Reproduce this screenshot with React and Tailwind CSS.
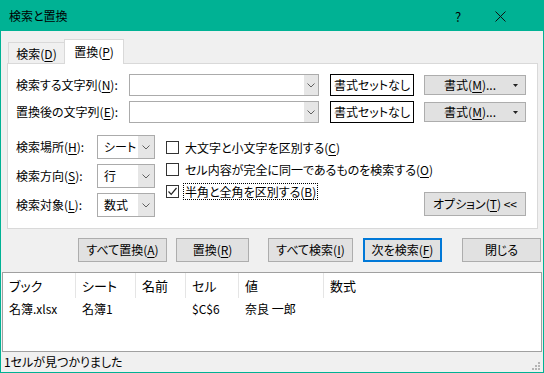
import React from 'react'

const U = ({ children }) => (
  <span className="underline underline-offset-[2px] decoration-[1px]">{children}</span>
)

const Chevron = () => (
  <svg width="8" height="5" viewBox="0 0 8 5">
    <path d="M0.5 0.5 L4 4 L7.5 0.5" stroke="#606060" strokeWidth="1" fill="none" />
  </svg>
)

const Combo = ({ className, value, arrowW }) => (
  <div className={`flex bg-white border border-[#ababab] ${className}`}>
    <div className="flex-1 flex items-center pl-[6px]">{value}</div>
    <div className={`flex items-center justify-center bg-[#e6e6e6] ${arrowW}`}>
      <Chevron />
    </div>
  </div>
)

const Check = ({ checked, label, focus }) => (
  <div className="flex items-center h-[22px] whitespace-nowrap">
    <div className="w-[13px] h-[13px] shrink-0 border border-[#333] bg-white flex items-center justify-center">
      {checked && (
        <svg width="11" height="11" viewBox="0 0 11 11">
          <path d="M1.5 5.5 L4.2 8.3 L9.5 2" stroke="#222" strokeWidth="1.2" fill="none" />
        </svg>
      )}
    </div>
    <div className={`ml-[4px] px-[1px] leading-[15px] ${focus ? 'border border-dotted border-black' : 'border border-transparent'}`}>
      {label}
    </div>
  </div>
)

const Btn = ({ className, children, primary }) => (
  <div
    className={`flex items-center justify-center whitespace-nowrap bg-[#e1e1e1] ${
      primary ? 'border-2 border-[#0078d7]' : 'border border-[#adadad]'
    } ${className}`}
  >
    {children}
  </div>
)

const columns = [
  { name: 'ブック', w: 'w-[73px]' },
  { name: 'シート', w: 'w-[60px]' },
  { name: '名前', w: 'w-[50px]' },
  { name: 'セル', w: 'w-[53px]' },
  { name: '値', w: 'w-[85px]' },
  { name: '数式', w: 'flex-1' },
]

const row = ['名簿.xlsx', '名簿1', '', '$C$6', '奈良 一郎', '']

export default function App() {
  return (
    <div className="w-[544px] h-[373px] border border-[#00b294] bg-[#f0f0f0] flex flex-col text-[12px] text-black font-['Noto_Sans_CJK_JP',sans-serif] [font-feature-settings:'palt'] leading-none overflow-hidden">
      {/* title bar */}
      <div className="h-[30px] bg-[#00b294] flex items-center pl-[8px]">
        <span className="flex-1">検索と置換</span>
        <span className="w-[46px] text-center text-[13px]">?</span>
        <span className="w-[38px] flex justify-center">
          <svg width="11" height="11" viewBox="0 0 11 11">
            <path d="M0.5 0.5 L10.5 10.5 M10.5 0.5 L0.5 10.5" stroke="#111" strokeWidth="1" />
          </svg>
        </span>
        <span className="w-[24px]" />
      </div>

      {/* tabs */}
      <div className="flex items-end h-[25px] mt-[8px] ml-[6px]">
        <div className="w-[56px] h-[22px] ml-px border border-b-0 border-r-0 border-[#d9d9d9] flex items-center justify-center">
          検索(<U>D</U>)
        </div>
        <div className="w-[60px] h-[25px] bg-white border border-b-0 border-[#d9d9d9] flex items-center justify-center relative z-10">
          置換(<U>P</U>)
        </div>
      </div>

      {/* panel */}
      <div className="ml-[6px] -mt-px w-[531px] h-[166px] bg-white border border-[#d9d9d9] pt-[10px] pl-[8px]">
        {[
          ['検索する文字列(', 'N', '):'],
          ['置換後の文字列(', 'E', '):'],
        ].map(([a, k, b], i) => (
          <div key={k} className={`flex items-center h-[22px] ${i ? 'mt-[5px]' : ''}`}>
            <div className="w-[113px]">
              {a}
              <U>{k}</U>
              {b}
            </div>
            <Combo className="w-[190px] h-[22px]" value="" arrowW="w-[14px]" />
            <div className="ml-[11px] w-[84px] h-[22px] border border-black flex items-center justify-center">
              書式セットなし
            </div>
            <Btn className="ml-[10px] w-[102px] h-[20px] !justify-end pr-[7px]">
              書式(<U>M</U>)...
              <svg className="ml-[17px]" width="5" height="3" viewBox="0 0 5 3">
                <path d="M0 0 L5 0 L2.5 3 Z" fill="#222" />
              </svg>
            </Btn>
          </div>
        ))}

        <div className="flex mt-[12px]">
          <div className="flex flex-col gap-[5px]">
            {[
              ['検索場所(', 'H', '):', 'シート'],
              ['検索方向(', 'S', '):', '行'],
              ['検索対象(', 'L', '):', '数式'],
            ].map(([a, k, b, v]) => (
              <div key={k} className="flex items-center h-[24px]">
                <div className="w-[81px]">
                  {a}
                  <U>{k}</U>
                  {b}
                </div>
                <Combo className="w-[58px] h-[24px]" value={v} arrowW="w-[16px]" />
              </div>
            ))}
          </div>
          <div className="ml-[11px] mt-[1px] flex flex-col flex-1 min-w-0">
            <Check label={<>大文字と小文字を区別する(<U>C</U>)</>} />
            <Check label={<>セル内容が完全に同一であるものを検索する(<U>O</U>)</>} />
            <Check checked focus label={<>半角と全角を区別する(<U>B</U>)</>} />
          </div>
          <div className="flex flex-col justify-end pb-[1px] pr-[11px]">
            <Btn className="w-[102px] h-[24px]">
              オプション(<U>T</U>) &lt;&lt;
            </Btn>
          </div>
        </div>
      </div>

      {/* action buttons */}
      <div className="flex mt-[9px] ml-[77px] h-[24px]">
        <Btn className="w-[89px]">
          すべて置換(<U>A</U>)
        </Btn>
        <Btn className="w-[73px] ml-[9px]">
          置換(<U>R</U>)
        </Btn>
        <Btn className="w-[85px] ml-[19px]">
          すべて検索(<U>I</U>)
        </Btn>
        <Btn primary className="w-[79px] ml-[10px]">
          次を検索(<U>F</U>)
        </Btn>
        <Btn className="w-[79px] ml-[20px]">閉じる</Btn>
      </div>

      {/* results list */}
      <div className="mt-[10px] ml-[1px] w-[540px] h-[79px] bg-white border-t border-l border-r border-[#a0a0a0] flex flex-col">
        <div className="flex h-[25px] text-[13px]">
          {columns.map((c, i) => (
            <div
              key={c.name}
              className={`${c.w} flex items-center pl-[6px] ${i < columns.length - 1 ? 'border-r border-[#e5e5e5]' : ''}`}
            >
              {c.name}
            </div>
          ))}
        </div>
        <div className="flex h-[22px]">
          {columns.map((c, i) => (
            <div key={c.name} className={`${c.w} flex items-center pl-[6px]`}>
              {row[i]}
            </div>
          ))}
        </div>
      </div>

      {/* status bar */}
      <div className="relative flex-1 ml-[1px] w-[540px] border-t border-[#a0a0a0] flex items-center pl-[2px]">
        1セルが見つかりました
        <div className="absolute right-[2px] bottom-[2px] grid grid-cols-3 gap-[1px]">
          {[0, 0, 1, 0, 1, 1, 1, 1, 1].map((d, i) => (
            <div key={i} className={`w-[2px] h-[2px] ${d ? 'bg-[#b5b5b5]' : ''}`} />
          ))}
        </div>
      </div>
    </div>
  )
}
